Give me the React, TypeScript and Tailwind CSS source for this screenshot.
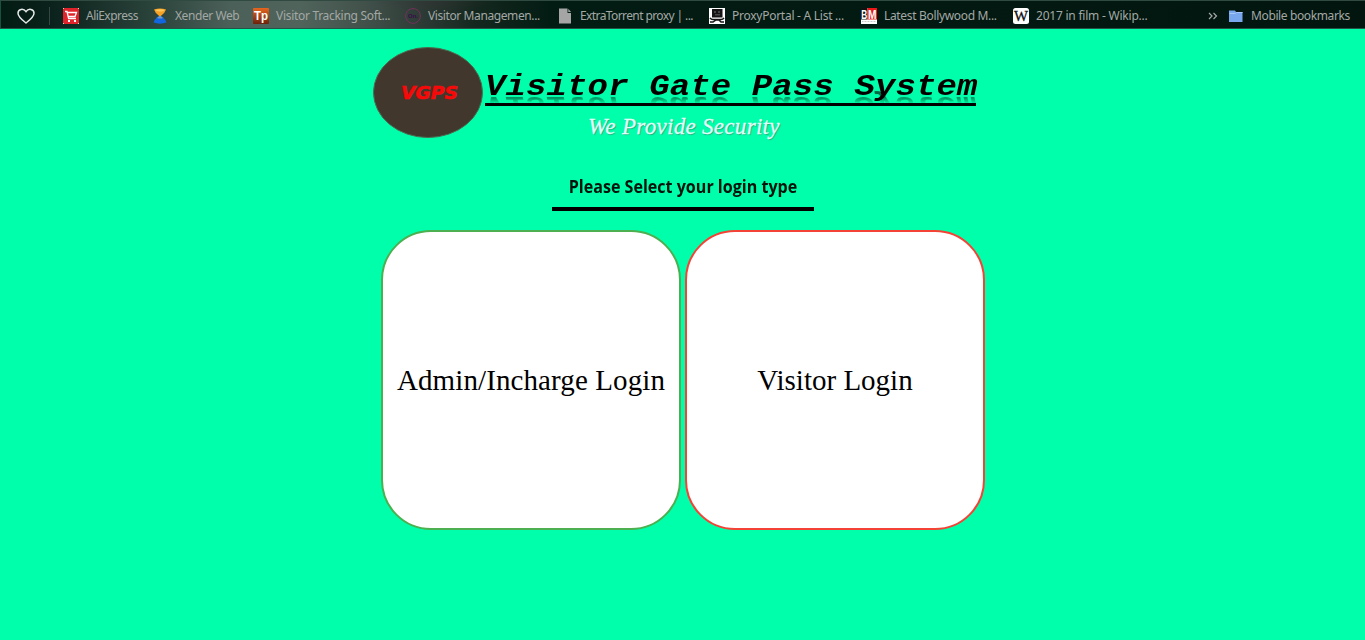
import React from "react";

type BookmarkProps = {
  label: string;
  width: string;
  tracking: string;
  icon: React.ReactNode;
};

function Bookmark({ label, width, tracking, icon }: BookmarkProps) {
  return (
    <div className={`flex shrink-0 items-center ${width}`}>
      <span className="mr-[7px] block size-4 shrink-0">{icon}</span>
      <span className={`whitespace-nowrap ${tracking}`}>{label}</span>
    </div>
  );
}

const CartIcon = (
  <svg viewBox="0 0 16 16" className="size-4">
    <rect width="16" height="16" fill="#e0242c" />
    <path d="M0 0h1v1H0zM15 0h1v1h-1zM0 15h1v1H0zM15 15h1v1h-1z" fill="#f7c9a0" />
    <path d="M2 3.5h2l1.6 7H13M4.5 4.500H13.500L12 8.500H5.500" fill="none" stroke="#fff" strokeWidth="1.3" />
    <path d="M5 12h2v2H5zM11 12h2v2h-2z" fill="#fff" />
  </svg>
);

const HourglassIcon = (
  <svg viewBox="0 0 16 16" className="size-4">
    <path d="M2 1.5Q8-.5 14 1.5Q13 5 8.8 8H7.2Q3 5 2 1.5Z" fill="#f5a125" />
    <path d="M3 2Q8 .5 13 2L10 3.5Q6 4 3 2Z" fill="#ffc95a" />
    <path d="M7.2 8h1.6Q13.5 10.5 14.3 14.5Q8 16.8 1.7 14.5Q2.5 10.5 7.2 8Z" fill="#1266e0" />
    <path d="M7.2 8h1.6L11 10Q8 11 5 10Z" fill="#7298bd" />
  </svg>
);

const TpIcon = (
  <svg viewBox="0 0 16 16" className="size-4">
    <defs>
      <linearGradient id="tp" x1="0" y1="0" x2="0" y2="1">
        <stop offset="0" stopColor="#e7661f" />
        <stop offset="1" stopColor="#6c210b" />
      </linearGradient>
    </defs>
    <rect width="16" height="16" rx="1" fill="url(#tp)" />
    <text x="1" y="11.8" textLength="14" lengthAdjust="spacingAndGlyphs" fontFamily="Liberation Sans, sans-serif" fontSize="13" fontWeight="700" fill="#fff">Tp</text>
  </svg>
);

const RingIcon = (
  <svg viewBox="0 0 16 16" className="size-4">
    <circle cx="8" cy="8" r="7.4" fill="none" stroke="#74305a" strokeWidth="1" />
    <text x="8" y="10" textAnchor="middle" fontFamily="Liberation Sans, sans-serif" fontSize="6" fontWeight="700" fill="#3a0c4a">On.</text>
  </svg>
);

const PageIcon = (
  <svg viewBox="0 0 16 16" className="size-4">
    <path d="M2 .5h8.5V5H14v10.5H2Z" fill="#a5a5a5" />
    <path d="M11.3.8 14 4h-2.7Z" fill="#a5a5a5" />
  </svg>
);

const PirateIcon = (
  <svg viewBox="0 0 16 16" className="size-4">
    <rect width="16" height="16" fill="#fff" />
    <path d="M3 1h10.5v8.5H3Z" fill="#151515" />
    <path d="M5 3.5h2v1H5zM9 3.5h2v1H9zM6 6.5h5v.8H6z" fill="#777" />
    <path d="M1 9.8q1 1.700 3 1.700h8q2 0 3-1.700M1 14h3l3-2h3l2 2h3" fill="none" stroke="#151515" strokeWidth="1.5" />
  </svg>
);

const BmIcon = (
  <svg viewBox="0 0 16 16" className="size-4 overflow-visible">
    <rect width="16" height="16" fill="#fff" />
    <path d="M0 0h6.5v11.5H0z" fill="#111" />
    <path d="M6.5 0H16v11.5H6.5z" fill="#ed1717" />
    <g fontFamily="Liberation Sans, sans-serif" fontSize="13" fontWeight="700" fill="#fff">
      <text x="0.2" y="10.5" textLength="6" lengthAdjust="spacingAndGlyphs">B</text>
      <text x="7" y="10.5" textLength="8.5" lengthAdjust="spacingAndGlyphs">M</text>
    </g>
    <path d="M1 13.5h14" stroke="#c7c7c7" strokeDasharray="1 .5" />
  </svg>
);

const WikiIcon = (
  <svg viewBox="0 0 16 16" className="size-4">
    <rect width="16" height="16" rx="2.5" fill="#fff" />
    <text x="1" y="12.5" textLength="14" lengthAdjust="spacingAndGlyphs" fontFamily="Liberation Serif, serif" fontSize="14" fill="#111" stroke="#111" strokeWidth="0.3">W</text>
  </svg>
);

const FolderIcon = (
  <svg viewBox="0 0 16 16" className="size-4">
    <path d="M1 2.5h6l1 1.5h6.5v10H1Z" fill="#79a7ee" />
    <path d="M1.5 5.5h6l1-1h6" fill="none" stroke="#a8c8f8" />
  </svg>
);

function BookmarksBar() {
  return (
    <nav className="flex h-[29px] items-center border-b border-t border-b-[#225548] border-t-[#304a42] bg-[radial-gradient(ellipse_60px_12px_at_435px_0px,#38303266,transparent),linear-gradient(90deg,#021b13_0px,#0b211b_50px,#29423a_150px,#4b6058_230px,#50645c_300px,#43534c_360px,#303d38_415px,#14281f_475px,#031c13_550px,#02160f_100%)] pl-[17px] pr-[15px] pt-[2px] text-[12px] leading-4 text-[#a3a8a5] shadow-[inset_1px_0_#17523f] [font-family:'Noto_Sans',sans-serif]">
      <svg viewBox="0 0 18 16" className="h-4 w-[18px] shrink-0">
        <path d="M9 15C5 11.8 1 8.8 1 5.2C1 1 6.4-.1 9 3.6C11.6-.1 17 1 17 5.2C17 8.8 13 11.8 9 15Z" fill="none" stroke="#e4e9e7" strokeWidth="1.5" />
      </svg>
      <span className="ml-[14px] mr-[13px] h-[18px] w-px shrink-0 bg-[#34483f]" />
      <Bookmark label="AliExpress" width="w-[89px]" tracking="tracking-[-0.54px]" icon={CartIcon} />
      <Bookmark label="Xender Web" width="w-[101px]" tracking="tracking-[-0.42px]" icon={HourglassIcon} />
      <Bookmark label="Visitor Tracking Soft..." width="w-[152px]" tracking="tracking-[-0.3px]" icon={TpIcon} />
      <Bookmark label="Visitor Managemen..." width="w-[152px]" tracking="tracking-[-0.4px]" icon={RingIcon} />
      <Bookmark label="ExtraTorrent proxy | ..." width="w-[152px]" tracking="tracking-[-0.6px]" icon={PageIcon} />
      <Bookmark label="ProxyPortal - A List ..." width="w-[152px]" tracking="tracking-[-0.26px]" icon={PirateIcon} />
      <Bookmark label="Latest Bollywood M..." width="w-[152px]" tracking="tracking-[-0.33px]" icon={BmIcon} />
      <Bookmark label="2017 in film - Wikip..." width="w-[152px]" tracking="tracking-[-0.22px]" icon={WikiIcon} />
      <svg viewBox="0 0 10 8" className="ml-auto mr-[10px] h-2 w-[10px] shrink-0">
        <path d="m1 1 3 3-3 3M5.5 1l3 3-3 3" fill="none" stroke="#a3a8a5" strokeWidth="1.2" />
      </svg>
      <Bookmark label="Mobile bookmarks" width="w-[122px]" tracking="tracking-[-0.38px]" icon={FolderIcon} />
    </nav>
  );
}

function Header() {
  return (
    <header className="flex h-[109px] pl-[373px] pt-[18px]">
      <svg viewBox="0 0 111 92" className="h-[92px] w-[111px] shrink-0">
        <ellipse cx="55" cy="45.5" rx="54.5" ry="45" fill="#41372d" stroke="#4f6b50" />
        <text x="28" y="51.5" textLength="57" lengthAdjust="spacingAndGlyphs" fontFamily="DejaVu Sans, sans-serif" fontSize="18" fontWeight="700" fontStyle="italic" fill="#f80909" stroke="#f80909" strokeWidth="0.6">VGPS</text>
      </svg>
      <div className="ml-px w-[491px]">
        <div className="mt-[20px] h-[39px] border-b-[3px] border-black">
          <h1 className="h-[36px] origin-bottom scale-y-[0.87] whitespace-pre text-[34px] font-bold italic leading-[36px] tracking-[0.12px] text-black [-webkit-box-reflect:below_-16px_linear-gradient(transparent_52%,rgba(0,0,0,0.6)_80%)] [font-family:'Liberation_Mono',monospace]">Visitor Gate Pass System</h1>
        </div>
        <p className="ml-[103px] mt-[8px] whitespace-nowrap text-[23px] italic leading-[26px] tracking-[0.3px] text-[#e4fff9] [-webkit-text-stroke:0.3px_#e4fff9] [font-family:'Liberation_Serif',serif] [text-shadow:1px_1px_1px_#24a77e]">We Provide Security</p>
      </div>
    </header>
  );
}

export default function App() {
  return (
    <main className="h-[640px] w-full overflow-hidden bg-[#00ffaa]">
      <BookmarksBar />
      <Header />
      <h2 className="mx-auto flex h-[73px] w-[262px] items-end justify-center whitespace-nowrap border-b-4 border-black pb-[10px] text-[18px] font-bold leading-[22px] text-[#00140c] [font-family:'Open_Sans',sans-serif]">
        <span className="origin-center scale-x-[0.893]">Please Select your login type</span>
      </h2>
      <section className="ml-[381px] mt-[19px] flex gap-1 text-[29px] leading-9 text-black [font-family:'Liberation_Serif',serif]">
        <button className="size-[300px] whitespace-nowrap rounded-[50px] border-2 border-[#4caf50] bg-white tracking-[0.1px]">Admin/Incharge Login</button>
        <button className="size-[300px] whitespace-nowrap rounded-[50px] border-2 border-[#f44336] bg-white">Visitor Login</button>
      </section>
    </main>
  );
}
